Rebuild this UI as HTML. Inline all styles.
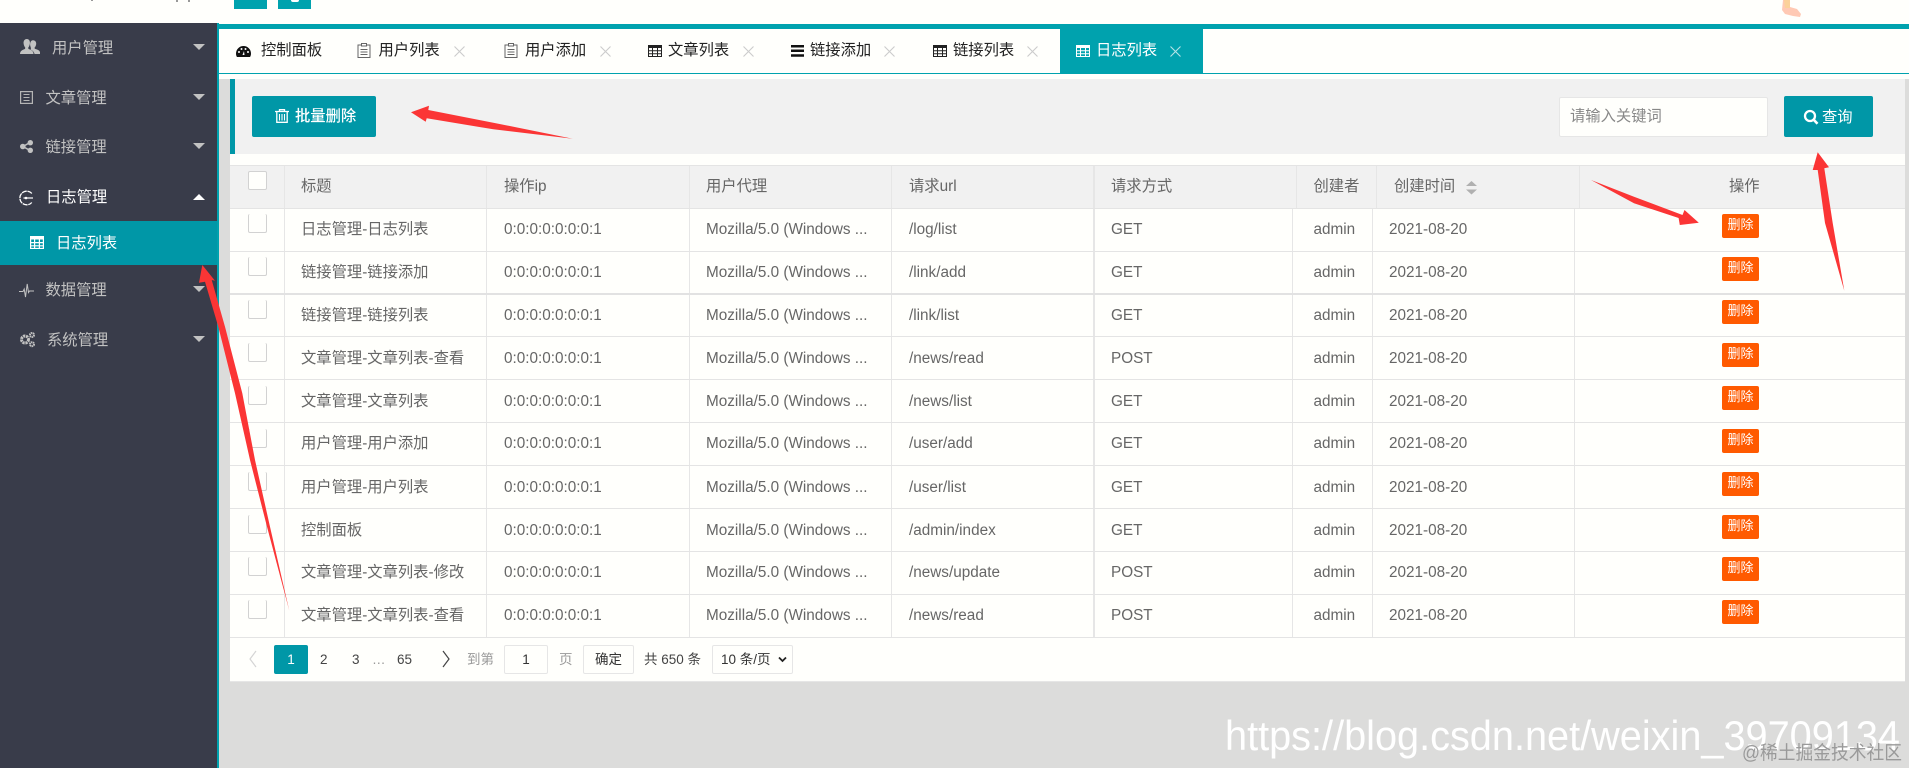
<!DOCTYPE html>
<html lang="zh">
<head>
<meta charset="utf-8">
<title>日志列表</title>
<style>
html,body{margin:0;padding:0;width:1909px;height:768px;overflow:hidden;background:#fffffc}
body{position:relative;font-family:"Liberation Sans","Noto Sans CJK SC",sans-serif;font-size:15.3px;color:#666}
.a{position:absolute;white-space:nowrap}
svg{position:absolute;overflow:visible}
.side{left:0;top:23px;width:217px;height:745px;background:#393c4a}
.sb{left:217px;top:23px;width:2px;height:745px;background:#00a2ae}
.bg{left:219px;top:79px;width:1690px;height:689px;background:#dcdcdb}
.mi{color:#c2c2c2;line-height:24px;height:24px}
.car{width:0;height:0;border-left:6.5px solid transparent;border-right:6.5px solid transparent;border-top:6px solid #c2c2c2;left:193px}
.tab{color:#222;line-height:24px;height:24px;top:39px}
.x{top:46px;width:11px;height:11px}
.btn{background:#0097a7;border-radius:2px;color:#fff;line-height:41px;height:41px;top:96px}
.card{left:230px;top:154px;width:1675px;height:528px;background:#fffffc;border-bottom:1px solid #e6e6e6;box-sizing:border-box}
.r{left:0;width:1675px;height:43px;border-bottom:1px solid #e4e4e4;box-sizing:border-box;line-height:41px}
.l{line-height:43px}
.r .a,.h .a{top:0}
.h{left:0;top:11px;width:1675px;height:44px;background:#f1f1f1;border-top:1px solid #e4e4e4;border-bottom:1px solid #e4e4e4;box-sizing:border-box;line-height:41px}
.v{position:absolute;top:0;width:1px;height:100%;background:#e6e6e6}
.c1{left:71px}.c2{left:274px}.c3{left:476px}.c4{left:679px}.c5{left:881px}.c6{left:1083.5px}
.ck{position:absolute;left:18px;top:5px;width:19px;height:19px;background:#fffffc;border:1px solid #d2d2d2;border-top:0;border-radius:2px;box-sizing:border-box}
.del{position:absolute;left:1492px;top:5px;width:37px;height:24px;background:#ff5a00;border-radius:2px;color:#fff;font-size:13px;line-height:22px;text-align:center}
.l .ck,.l .del{top:6px}
.pg{line-height:29px;height:29px;top:645px;color:#444;font-size:13.5px}
.bx{border:1px solid #e6e6e6;border-radius:2px;box-sizing:border-box;background:#fffffc;text-align:center;line-height:27px;color:#333;height:29px;top:645px;font-size:13.5px}
</style>
</head>
<body>
<!-- top header remnants -->
<div class="a" style="left:234px;top:0;width:33px;height:9px;background:#00a2ae"></div>
<div class="a" style="left:278px;top:0;width:33px;height:9px;background:#00a2ae"></div>
<div class="a" style="left:291px;top:0;width:8px;height:2px;background:#fff;border-radius:0 0 4px 4px"></div>
<div class="a" style="left:91px;top:0;width:2px;height:1px;background:#999"></div>
<div class="a" style="left:176px;top:0;width:2px;height:2px;background:#999"></div>
<div class="a" style="left:188px;top:0;width:2px;height:2px;background:#999"></div>
<svg style="left:0;top:0" width="1909" height="20"><path d="M1783 0H1790L1790 7 1797 9 1801 14 1800 17 1793 16 1785 14 1782 10Z" fill="#ffc9b4"/><path d="M1784 0H1790L1790 8 1785 8Z" fill="#fbd19a"/></svg>

<div class="a" style="left:219px;top:24px;width:1690px;height:5px;background:#00a2ae"></div>
<div class="a" style="left:219px;top:73px;width:1690px;height:1px;background:#00a2ae"></div>

<div class="a bg"></div>
<div class="a side"></div>
<div class="a sb"></div>

<!-- sidebar -->
<svg style="left:20px;top:39px" width="20" height="15" viewBox="0 0 20 15"><g fill="#c2c2c2"><path d="M13 1.2C15.2 1.2 16.4 3 16.2 5 16 6.8 15.200 8 14.500 8.800L14.800 9.800C16.500 10.500 19.500 11 20 13.200V15H14.500C14.300 13 12.500 11.500 10.500 10.600 11.500 9.800 10.500 8 10.200 6.500 9.800 3.500 11 1.200 13 1.200Z"/><path d="M6.800 0C9.200 0 10.200 2.200 9.900 4.500 9.700 6.300 9 7.800 8.200 8.700L8.500 10C10.500 10.800 13.500 11.500 13.500 15H0C0 11.500 3 10.800 5 10L5.300 8.700C4.500 7.800 3.800 6.300 3.600 4.500 3.300 2.200 4.400 0 6.800 0Z"/></g></svg>
<div class="a mi" style="left:52px;top:37px">用户管理</div>
<div class="a car" style="top:44px"></div>

<svg style="left:20px;top:91px" width="13" height="13" viewBox="0 0 13 13"><rect x=".6" y=".6" width="11.800" height="11.800" fill="none" stroke="#b5b5b5" stroke-width="1.200"/><path d="M3.500 3.500H9.500M3.500 6.500H9.500M3.500 9.500H9.500" stroke="#b5b5b5"/></svg>
<div class="a mi" style="left:45.500px;top:87px">文章管理</div>
<div class="a car" style="top:94px"></div>

<svg style="left:20px;top:140px" width="13" height="13" viewBox="0 0 13 13"><path d="M3 6.500L10 2.500M3 6.500L10 10.500" stroke="#c2c2c2" stroke-width="1.500"/><circle cx="2.800" cy="6.500" r="2.800" fill="#c2c2c2"/><circle cx="10.300" cy="2.700" r="2.700" fill="#c2c2c2"/><circle cx="10.300" cy="10.300" r="2.700" fill="#c2c2c2"/></svg>
<div class="a mi" style="left:45.500px;top:136px">链接管理</div>
<div class="a car" style="top:143px"></div>

<svg style="left:19px;top:190px" width="15" height="16" viewBox="0 0 15 16"><path d="M12.800 3.500A6.800 6.800 0 1 0 12.800 12.500" fill="none" stroke="#fff" stroke-width="1.300" stroke-dasharray="5 .7"/><path d="M4.500 8H14" stroke="#fff" stroke-width="1.200"/><circle cx="7" cy="8" r="1.300" fill="#fff"/></svg>
<div class="a mi" style="left:46px;top:186px;color:#fff">日志管理</div>
<div class="a car" style="top:194px;border-top:0;border-bottom:6px solid #fff"></div>

<div class="a" style="left:0;top:221px;width:217px;height:44px;background:#0097a7"></div>
<svg style="left:30px;top:236px" width="14" height="13" viewBox="0 0 14 13"><path fill="#fff" d="M0 0H14V13H0ZM1.200 3.500V6H4V3.500ZM5.200 3.500V6H8.800V3.500ZM10 3.500V6H12.800V3.500ZM1.200 7.200V9.200H4V7.200ZM5.200 7.200V9.200H8.800V7.200ZM10 7.200V9.200H12.800V7.200ZM1.200 10.400V11.900H4V10.400ZM5.200 10.400V11.900H8.800V10.400ZM10 10.400V11.900H12.800V10.400Z" fill-rule="evenodd"/></svg>
<div class="a mi" style="left:56px;top:232px;color:#fff">日志列表</div>

<svg style="left:19px;top:283px" width="15" height="15" viewBox="0 0 15 15"><path d="M0 8.500H4L5.200 6 6.500 14 8.200 1 9.500 9.500 10.500 8H15" fill="none" stroke="#c2c2c2" stroke-width="1"/></svg>
<div class="a mi" style="left:45.500px;top:279px">数据管理</div>
<div class="a car" style="top:286px"></div>

<svg style="left:19px;top:332px" width="16" height="15" viewBox="0 0 16 15"><g fill="none" stroke="#c2c2c2"><circle cx="6" cy="7.500" r="3.500" stroke-width="3" stroke-dasharray="2.200 .7"/><circle cx="13" cy="3" r="2" stroke-width="2" stroke-dasharray="1.500 .5"/><circle cx="13" cy="12.200" r="2" stroke-width="2" stroke-dasharray="1.500 .5"/></g></svg>
<div class="a mi" style="left:47px;top:329px">系统管理</div>
<div class="a car" style="top:336px"></div>

<!-- tabs -->
<svg style="left:236px;top:46px" width="15" height="11" viewBox="0 0 15 11"><path d="M7.500 0A7.500 7.500 0 0 0 0 7.500C0 9 .4 10.200 1 11H14C14.600 10.200 15 9 15 7.500A7.500 7.500 0 0 0 7.500 0Z" fill="#111"/><g fill="#fff"><circle cx="3" cy="6" r="1"/><circle cx="5.500" cy="3" r="1"/><circle cx="9.500" cy="3" r="1"/><circle cx="12" cy="6" r="1"/><path d="M6.500 9L8 5 8.500 9Z"/></g></svg>
<div class="a tab" style="left:261px">控制面板</div>

<svg style="left:357px;top:43px" width="15" height="15" viewBox="0 0 15 15"><path d="M4 2H1V14.500H13V2H10" fill="none" stroke="#666"/><rect x="4.500" y=".5" width="5" height="2.500" fill="#fff" stroke="#666"/><path d="M3.500 6.500H10.500M3.500 9H10.500M3.500 11.500H10.500" stroke="#666"/></svg>
<div class="a tab" style="left:378.500px">用户列表</div>
<svg class="a x" style="left:454px" viewBox="0 0 11 11"><path d="M.5 .5L10.500 10.500M10.500 .5L.5 10.500" stroke="#ccc" stroke-width="1.100" fill="none"/></svg>

<svg style="left:504px;top:43px" width="15" height="15" viewBox="0 0 15 15"><path d="M4 2H1V14.500H13V2H10" fill="none" stroke="#666"/><rect x="4.500" y=".5" width="5" height="2.500" fill="#fff" stroke="#666"/><path d="M3.500 6.500H10.500M3.500 9H10.500M3.500 11.500H10.500" stroke="#666"/></svg>
<div class="a tab" style="left:525px">用户添加</div>
<svg class="a x" style="left:600px" viewBox="0 0 11 11"><path d="M.5 .5L10.500 10.500M10.500 .5L.5 10.500" stroke="#ccc" stroke-width="1.100" fill="none"/></svg>

<svg style="left:648px;top:45px" width="14" height="12" viewBox="0 0 14 12"><path fill="#222" fill-rule="evenodd" d="M0 0H14V12H0ZM1 3V5.200H4V3ZM5 3V5.200H9V3ZM10 3V5.200H13V3ZM1 6.200V8.300H4V6.200ZM5 6.200V8.300H9V6.200ZM10 6.200V8.300H13V6.200ZM1 9.300V11H4V9.300ZM5 9.300V11H9V9.300ZM10 9.300V11H13V9.300Z"/></svg>
<div class="a tab" style="left:668px">文章列表</div>
<svg class="a x" style="left:743px" viewBox="0 0 11 11"><path d="M.5 .5L10.500 10.500M10.500 .5L.5 10.500" stroke="#ccc" stroke-width="1.100" fill="none"/></svg>

<svg style="left:791px;top:45px" width="13" height="12" viewBox="0 0 13 12"><path fill="#111" d="M0 0H13V2.500H0ZM0 4.500H13V7H0ZM0 9.200H13V11.700H0Z"/></svg>
<div class="a tab" style="left:810px">链接添加</div>
<svg class="a x" style="left:884px" viewBox="0 0 11 11"><path d="M.5 .5L10.500 10.500M10.500 .5L.5 10.500" stroke="#ccc" stroke-width="1.100" fill="none"/></svg>

<svg style="left:933px;top:45px" width="14" height="12" viewBox="0 0 14 12"><path fill="#222" fill-rule="evenodd" d="M0 0H14V12H0ZM1 3V5.200H4V3ZM5 3V5.200H9V3ZM10 3V5.200H13V3ZM1 6.200V8.300H4V6.200ZM5 6.200V8.300H9V6.200ZM10 6.200V8.300H13V6.200ZM1 9.300V11H4V9.300ZM5 9.300V11H9V9.300ZM10 9.300V11H13V9.300Z"/></svg>
<div class="a tab" style="left:953px">链接列表</div>
<svg class="a x" style="left:1027px" viewBox="0 0 11 11"><path d="M.5 .5L10.500 10.500M10.500 .5L.5 10.500" stroke="#ccc" stroke-width="1.100" fill="none"/></svg>

<div class="a" style="left:1060px;top:29px;width:143px;height:44px;background:#00a2ae"></div>
<svg style="left:1076px;top:45px" width="14" height="12" viewBox="0 0 14 12"><path fill="#fff" fill-rule="evenodd" d="M0 0H14V12H0ZM1 3V5.200H4V3ZM5 3V5.200H9V3ZM10 3V5.200H13V3ZM1 6.200V8.300H4V6.200ZM5 6.200V8.300H9V6.200ZM10 6.200V8.300H13V6.200ZM1 9.300V11H4V9.300ZM5 9.300V11H9V9.300ZM10 9.300V11H13V9.300Z"/></svg>
<div class="a tab" style="left:1096px;color:#fff">日志列表</div>
<svg class="a x" style="left:1170px" viewBox="0 0 11 11"><path d="M.5 .5L10.500 10.500M10.500 .5L.5 10.500" stroke="#b5e3e7" stroke-width="1.100" fill="none"/></svg>

<!-- toolbar -->
<div class="a" style="left:230px;top:79px;width:1675px;height:75px;background:#f1f1f1"></div>
<div class="a" style="left:230px;top:79px;width:5px;height:75px;background:#0097a7"></div>
<div class="a btn" style="left:252px;width:124px"></div>
<svg style="left:275px;top:109px" width="14" height="14" viewBox="0 0 14 14"><path d="M0 2.500H14M4.500 2.500V.7H9.500V2.500" fill="none" stroke="#fff" stroke-width="1.300"/><path d="M1.800 3V13.300H12.200V3" fill="none" stroke="#fff" stroke-width="1.300"/><path d="M4.500 5V11.500M7 5V11.500M9.500 5V11.500" stroke="#fff" stroke-width="1.100"/></svg>
<div class="a" style="left:295px;top:96px;line-height:41px;color:#fff;font-weight:500">批量删除</div>

<div class="a" style="left:1559px;top:96.500px;width:209px;height:40px;background:#fffffc;border:1px solid #e6e6e6;border-radius:2px;box-sizing:border-box"></div>
<div class="a" style="left:1570px;top:97px;line-height:39px;color:#888">请输入关键词</div>
<div class="a btn" style="left:1784px;width:89px"></div>
<svg style="left:1804px;top:110px" width="14" height="14" viewBox="0 0 14 14"><circle cx="6" cy="6" r="5" fill="none" stroke="#fff" stroke-width="2.300"/><path d="M9.500 9.500L13.500 13.800" stroke="#fff" stroke-width="2.600"/></svg>
<div class="a" style="left:1822px;top:97px;line-height:41px;color:#fff">查询</div>

<!-- table -->
<div class="a card">
<div class="a h">
<span class="v" style="left:54px"></span><span class="v" style="left:256px"></span><span class="v" style="left:459px"></span><span class="v" style="left:661px"></span><span class="v" style="left:863px;width:2px"></span><span class="v" style="left:1066px"></span><span class="v" style="left:1146px"></span><span class="v" style="left:1349px"></span>
<span class="ck" style="border-top:1px solid #d2d2d2;top:5px"></span>
<span class="a c1">标题</span><span class="a c2">操作ip</span><span class="a c3">用户代理</span><span class="a c4">请求url</span><span class="a c5">请求方式</span><span class="a c6">创建者</span><span class="a" style="left:1164px">创建时间</span><span class="a" style="left:1499px">操作</span>
<svg style="left:1236px;top:15px" width="11" height="14" viewBox="0 0 11 14"><path d="M5.500 0L11 5H0ZM0 8.500H11L5.500 13.500Z" fill="#b0b0b0"/></svg>
</div>

<div class="a r" style="top:55px"><span class="v" style="left:54px"></span><span class="v" style="left:256px"></span><span class="v" style="left:459px"></span><span class="v" style="left:661px"></span><span class="v" style="left:863px;width:2px"></span><span class="v" style="left:1062px"></span><span class="v" style="left:1142px"></span><span class="v" style="left:1344px"></span><span class="ck"></span><span class="a c1">日志管理-日志列表</span><span class="a c2">0:0:0:0:0:0:0:1</span><span class="a c3">Mozilla/5.0 (Windows ...</span><span class="a c4">/log/list</span><span class="a c5">GET</span><span class="a c6">admin</span><span class="a" style="left:1159px">2021-08-20</span><span class="del">删除</span></div>

<div class="a r" style="top:98px;border-bottom:2px solid #e2e2e2"><span class="v" style="left:54px"></span><span class="v" style="left:256px"></span><span class="v" style="left:459px"></span><span class="v" style="left:661px"></span><span class="v" style="left:863px;width:2px"></span><span class="v" style="left:1062px"></span><span class="v" style="left:1142px"></span><span class="v" style="left:1344px"></span><span class="ck"></span><span class="a c1">链接管理-链接添加</span><span class="a c2">0:0:0:0:0:0:0:1</span><span class="a c3">Mozilla/5.0 (Windows ...</span><span class="a c4">/link/add</span><span class="a c5">GET</span><span class="a c6">admin</span><span class="a" style="left:1159px">2021-08-20</span><span class="del">删除</span></div>

<div class="a r" style="top:141px;height:42px"><span class="v" style="left:54px"></span><span class="v" style="left:256px"></span><span class="v" style="left:459px"></span><span class="v" style="left:661px"></span><span class="v" style="left:863px;width:2px"></span><span class="v" style="left:1062px"></span><span class="v" style="left:1142px"></span><span class="v" style="left:1344px"></span><span class="ck"></span><span class="a c1">链接管理-链接列表</span><span class="a c2">0:0:0:0:0:0:0:1</span><span class="a c3">Mozilla/5.0 (Windows ...</span><span class="a c4">/link/list</span><span class="a c5">GET</span><span class="a c6">admin</span><span class="a" style="left:1159px">2021-08-20</span><span class="del">删除</span></div>

<div class="a r l" style="top:183px"><span class="v" style="left:54px"></span><span class="v" style="left:256px"></span><span class="v" style="left:459px"></span><span class="v" style="left:661px"></span><span class="v" style="left:863px;width:2px"></span><span class="v" style="left:1062px"></span><span class="v" style="left:1142px"></span><span class="v" style="left:1344px"></span><span class="ck"></span><span class="a c1">文章管理-文章列表-查看</span><span class="a c2">0:0:0:0:0:0:0:1</span><span class="a c3">Mozilla/5.0 (Windows ...</span><span class="a c4">/news/read</span><span class="a c5">POST</span><span class="a c6">admin</span><span class="a" style="left:1159px">2021-08-20</span><span class="del">删除</span></div>

<div class="a r l" style="top:226px"><span class="v" style="left:54px"></span><span class="v" style="left:256px"></span><span class="v" style="left:459px"></span><span class="v" style="left:661px"></span><span class="v" style="left:863px;width:2px"></span><span class="v" style="left:1062px"></span><span class="v" style="left:1142px"></span><span class="v" style="left:1344px"></span><span class="ck"></span><span class="a c1">文章管理-文章列表</span><span class="a c2">0:0:0:0:0:0:0:1</span><span class="a c3">Mozilla/5.0 (Windows ...</span><span class="a c4">/news/list</span><span class="a c5">GET</span><span class="a c6">admin</span><span class="a" style="left:1159px">2021-08-20</span><span class="del">删除</span></div>

<div class="a r" style="top:269px"><span class="v" style="left:54px"></span><span class="v" style="left:256px"></span><span class="v" style="left:459px"></span><span class="v" style="left:661px"></span><span class="v" style="left:863px;width:2px"></span><span class="v" style="left:1062px"></span><span class="v" style="left:1142px"></span><span class="v" style="left:1344px"></span><span class="ck" style="top:6px"></span><span class="a c1">用户管理-用户添加</span><span class="a c2">0:0:0:0:0:0:0:1</span><span class="a c3">Mozilla/5.0 (Windows ...</span><span class="a c4">/user/add</span><span class="a c5">GET</span><span class="a c6">admin</span><span class="a" style="left:1159px">2021-08-20</span><span class="del" style="top:6px">删除</span></div>

<div class="a r l" style="top:312px"><span class="v" style="left:54px"></span><span class="v" style="left:256px"></span><span class="v" style="left:459px"></span><span class="v" style="left:661px"></span><span class="v" style="left:863px;width:2px"></span><span class="v" style="left:1062px"></span><span class="v" style="left:1142px"></span><span class="v" style="left:1344px"></span><span class="ck"></span><span class="a c1">用户管理-用户列表</span><span class="a c2">0:0:0:0:0:0:0:1</span><span class="a c3">Mozilla/5.0 (Windows ...</span><span class="a c4">/user/list</span><span class="a c5">GET</span><span class="a c6">admin</span><span class="a" style="left:1159px">2021-08-20</span><span class="del">删除</span></div>

<div class="a r l" style="top:355px"><span class="v" style="left:54px"></span><span class="v" style="left:256px"></span><span class="v" style="left:459px"></span><span class="v" style="left:661px"></span><span class="v" style="left:863px;width:2px"></span><span class="v" style="left:1062px"></span><span class="v" style="left:1142px"></span><span class="v" style="left:1344px"></span><span class="ck"></span><span class="a c1">控制面板</span><span class="a c2">0:0:0:0:0:0:0:1</span><span class="a c3">Mozilla/5.0 (Windows ...</span><span class="a c4">/admin/index</span><span class="a c5">GET</span><span class="a c6">admin</span><span class="a" style="left:1159px">2021-08-20</span><span class="del">删除</span></div>

<div class="a r" style="top:398px"><span class="v" style="left:54px"></span><span class="v" style="left:256px"></span><span class="v" style="left:459px"></span><span class="v" style="left:661px"></span><span class="v" style="left:863px;width:2px"></span><span class="v" style="left:1062px"></span><span class="v" style="left:1142px"></span><span class="v" style="left:1344px"></span><span class="ck"></span><span class="a c1">文章管理-文章列表-修改</span><span class="a c2">0:0:0:0:0:0:0:1</span><span class="a c3">Mozilla/5.0 (Windows ...</span><span class="a c4">/news/update</span><span class="a c5">POST</span><span class="a c6">admin</span><span class="a" style="left:1159px">2021-08-20</span><span class="del">删除</span></div>

<div class="a r" style="top:441px"><span class="v" style="left:54px"></span><span class="v" style="left:256px"></span><span class="v" style="left:459px"></span><span class="v" style="left:661px"></span><span class="v" style="left:863px;width:2px"></span><span class="v" style="left:1062px"></span><span class="v" style="left:1142px"></span><span class="v" style="left:1344px"></span><span class="ck"></span><span class="a c1">文章管理-文章列表-查看</span><span class="a c2">0:0:0:0:0:0:0:1</span><span class="a c3">Mozilla/5.0 (Windows ...</span><span class="a c4">/news/read</span><span class="a c5">POST</span><span class="a c6">admin</span><span class="a" style="left:1159px">2021-08-20</span><span class="del">删除</span></div>
</div>

<!-- pagination -->
<svg style="left:248px;top:650px" width="10" height="18" viewBox="0 0 10 18"><path d="M8 1L2 9 8 17" fill="none" stroke="#d4d4d4" stroke-width="1.200"/></svg>
<div class="a" style="left:274px;top:645px;width:34px;height:29px;background:#0097a7;border-radius:2px;color:#fff;text-align:center;line-height:29px;font-size:13.500px">1</div>
<div class="a pg" style="left:320px">2</div>
<div class="a pg" style="left:352px">3</div>
<div class="a pg" style="left:372px;color:#999">…</div>
<div class="a pg" style="left:397px">65</div>
<svg style="left:441px;top:650px" width="10" height="18" viewBox="0 0 10 18"><path d="M2 1L8 9 2 17" fill="none" stroke="#444" stroke-width="1.200"/></svg>
<div class="a pg" style="left:467px;color:#999">到第</div>
<div class="a bx" style="left:504px;width:44px">1</div>
<div class="a pg" style="left:559px;color:#999">页</div>
<div class="a bx" style="left:583px;width:51px">确定</div>
<div class="a pg" style="left:644px">共 650 条</div>
<div class="a bx" style="left:712px;width:81px;text-align:left;padding-left:8px">10 条/页</div>
<svg style="left:778px;top:656px" width="9" height="7" viewBox="0 0 9 7"><path d="M1 1.500L4.500 5 8 1.500" fill="none" stroke="#222" stroke-width="1.800"/></svg>

<!-- watermark -->
<svg style="left:0;top:0" width="1909" height="768">
<text x="1225" y="750" font-family="Liberation Sans, sans-serif" font-size="42" fill="#fff" textLength="675" lengthAdjust="spacingAndGlyphs">https://blog.csdn.net/weixin_39709134</text>
<text x="1742" y="759" font-family="Liberation Sans, Noto Sans CJK SC, sans-serif" font-size="19" fill="#9a9a9a" textLength="160" lengthAdjust="spacingAndGlyphs">@稀土掘金技术社区</text>
<!-- arrows -->
<g fill="#fb3535">
<polygon points="411,112.300 429,105.700 428.300,110 493.300,122.700 572.700,138.700 493.300,129.300 426.700,118.300 425.700,121.700"/>
<polygon points="1817.700,152.300 1829,167.300 1824.300,168.300 1832.700,223 1844.300,290.700 1825,223 1817.700,170 1812.700,170"/>
<polygon points="1591,180 1634,196.700 1682.500,215 1684.500,210 1698.800,222.700 1679.800,225 1678.600,218 1634,203.300"/>
<polygon points="202.300,265 215,280.700 211.700,280 225,326.700 242.300,393.300 255,460 270,526.700 289.300,610.700 267,526.700 250,460 235,393.300 218.300,326.700 205,281.700 199,282.700"/>
</g>
</svg>
</body>
</html>
